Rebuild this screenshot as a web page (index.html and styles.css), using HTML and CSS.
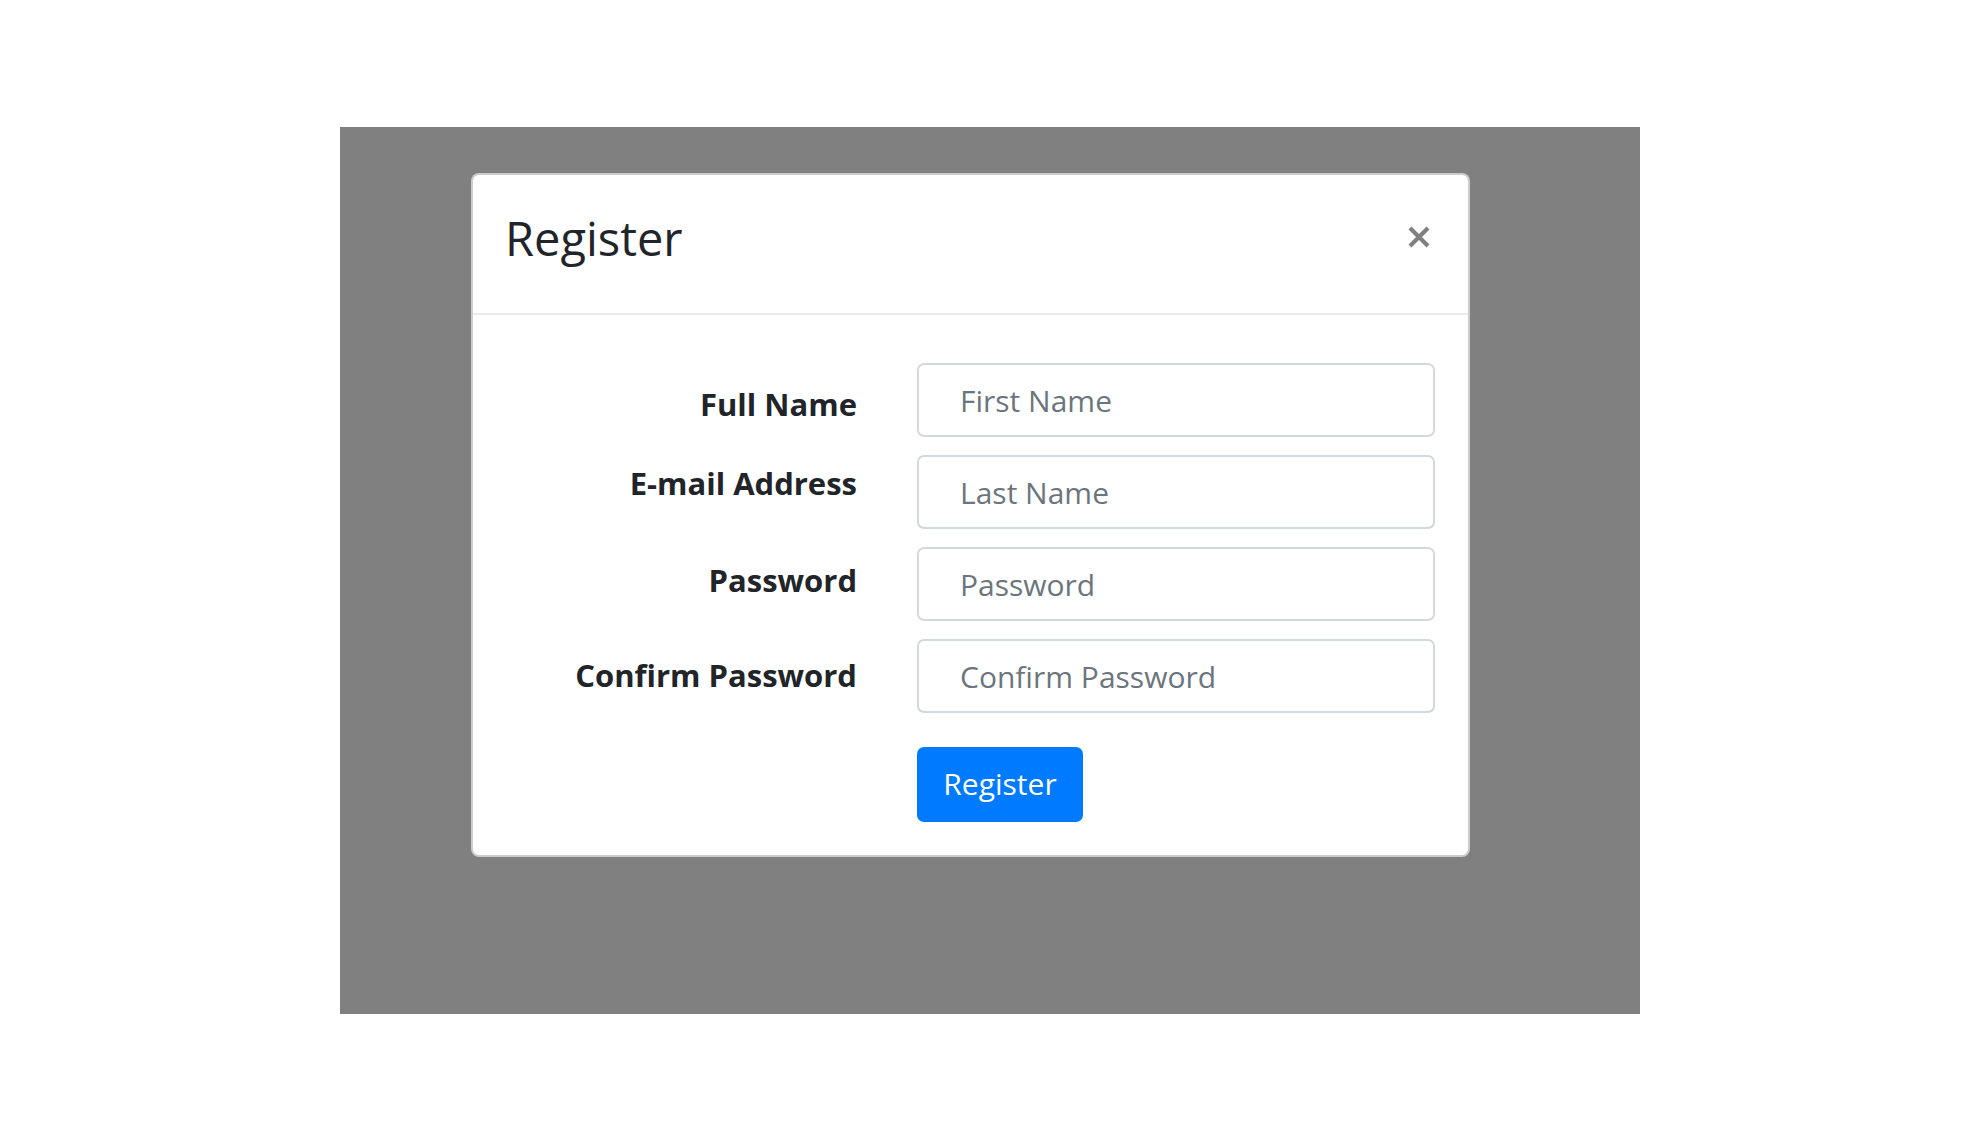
FILE: index.html
```html
<!DOCTYPE html>
<html lang="en">
<head>
<meta charset="utf-8">
<title>Register</title>
<link rel="stylesheet" href="styles.css">
</head>
<body>
<div class="stage">
  <div class="modal">
    <div class="modal-header">
      <h5 class="modal-title">Register</h5>
      <button class="close" type="button" aria-label="Close">
        <svg width="24" height="22" viewBox="0 0 24 22"><path d="M3 2 L21 20 M21 2 L3 20" stroke="#808080" stroke-width="4.2" stroke-linecap="butt"/></svg>
      </button>
    </div>
    <div class="modal-body">
      <form class="form">
        <label class="label l1">Full Name</label>
        <input class="input" type="text" placeholder="First Name">
        <label class="label l2">E-mail Address</label>
        <input class="input" type="text" placeholder="Last Name">
        <label class="label l3">Password</label>
        <input class="input" type="password" placeholder="Password">
        <label class="label l4">Confirm Password</label>
        <input class="input" type="password" placeholder="Confirm Password">
        <div class="spacer"></div>
        <div class="actions"><button class="btn" type="button">Register</button></div>
      </form>
    </div>
  </div>
</div>
</body>
</html>
```
FILE: styles.css
```css
html, body {
  margin: 0;
  padding: 0;
  background: #fff;
}
body {
  font-family: "Open Sans", "Noto Sans", sans-serif;
  color: #212529;
}
.stage {
  margin: 127px 0 0 340px;
  width: 1300px;
  height: 887px;
  background: #808080;
  padding: 46px 0 0 131px;
  box-sizing: border-box;
}
.modal {
  width: 999px;
  box-sizing: border-box;
  background: #fff;
  border: 2px solid rgba(0, 0, 0, 0.2);
  border-radius: 8px;
}
.modal-header {
  display: flex;
  justify-content: space-between;
  align-items: flex-start;
  height: 140px;
  box-sizing: border-box;
  border-bottom: 2px solid #e9ecef;
  padding: 0 37px 0 32px;
}
.modal-title {
  margin: 0;
  padding-top: 33px;
  font-size: 47px;
  line-height: 60px;
  font-weight: 400;
  color: #212529;
}
.close {
  margin-top: 51px;
  padding: 0;
  border: 0;
  background: transparent;
  display: block;
  line-height: 0;
}
.modal-body {
  padding: 48px 0 33px 0;
}
.form {
  display: grid;
  grid-template-columns: 384px 518px;
  column-gap: 60px;
  row-gap: 18px;
  margin: 0;
}
.label {
  text-align: right;
  font-weight: 700;
  font-size: 31px;
  line-height: 40px;
  color: #212529;
}
.l1 { padding-top: 21px; }
.l2 { padding-top: 8px; }
.l3 { padding-top: 13px; }
.l4 { padding-top: 16px; }
.input {
  display: block;
  box-sizing: border-box;
  width: 518px;
  height: 74px;
  border: 2px solid #d3d8dd;
  border-radius: 7px;
  padding: 0 0 0 41px;
  font-family: "Open Sans", "Noto Sans", sans-serif;
  font-size: 30px;
  color: #495057;
  background: #fff;
  margin: 0;
}
.input::placeholder {
  color: #6c757d;
  opacity: 1;
}
.actions {
  padding-top: 16px;
}
.btn {
  display: block;
  width: 166px;
  height: 75px;
  border: 0;
  border-radius: 7px;
  background: #007bff;
  color: #fff;
  font-family: "Open Sans", "Noto Sans", sans-serif;
  font-size: 30px;
  padding: 0 0 2px 0;
  margin: 0;
}
```
